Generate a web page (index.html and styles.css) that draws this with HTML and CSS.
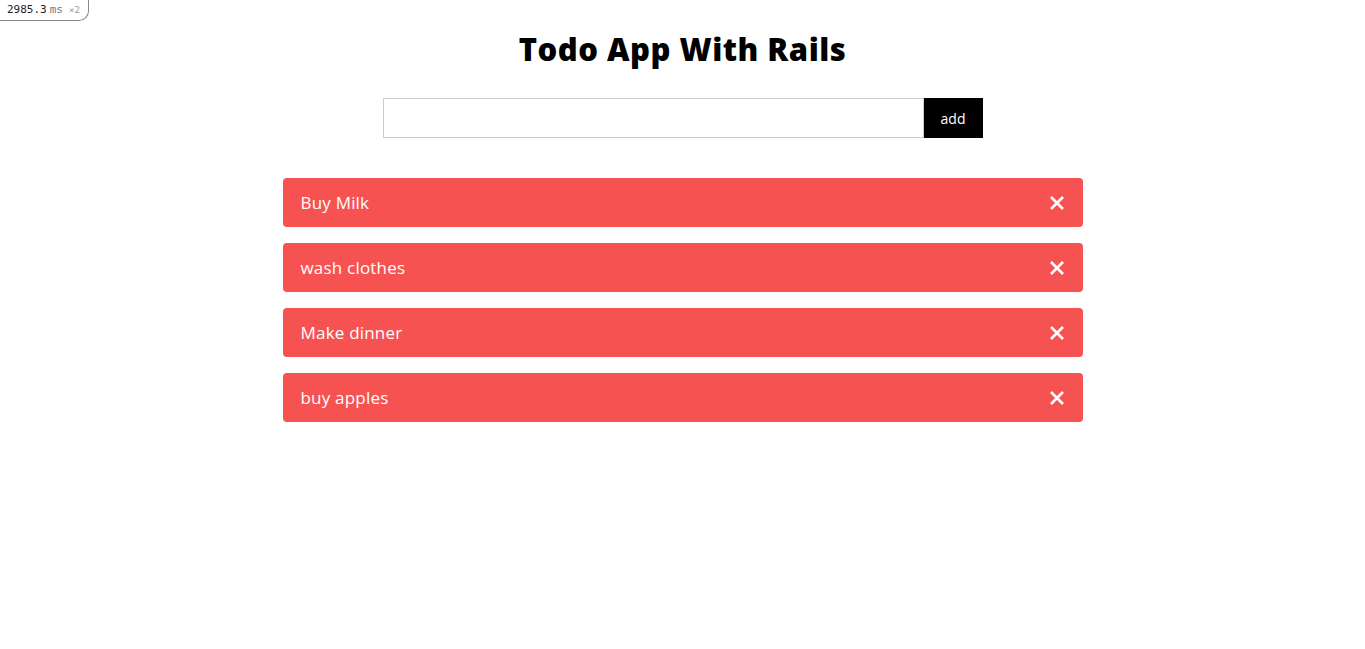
FILE: index.html
```html
<!DOCTYPE html>
<html>
<head>
<meta charset="utf-8">
<link rel="stylesheet" href="styles.css">
</head>
<body>
<div class="profiler"><span class="ms-num">2985.3</span><span class="ms-unit">ms</span><span class="ms-count">×2</span></div>
<main class="app">
  <h1 class="title">Todo App With Rails</h1>
  <form class="add-form">
    <input class="add-input" type="text">
    <button class="add-btn" type="button">add</button>
  </form>
  <ul class="todo-list">
    <li class="todo"><span class="todo-text">Buy Milk</span><svg class="x" viewBox="0 0 16 16" width="16" height="16"><path d="M2 2L14 14M14 2L2 14" stroke="#fff" stroke-width="2.6" stroke-linecap="butt"/></svg></li>
    <li class="todo"><span class="todo-text">wash clothes</span><svg class="x" viewBox="0 0 16 16" width="16" height="16"><path d="M2 2L14 14M14 2L2 14" stroke="#fff" stroke-width="2.6" stroke-linecap="butt"/></svg></li>
    <li class="todo"><span class="todo-text">Make dinner</span><svg class="x" viewBox="0 0 16 16" width="16" height="16"><path d="M2 2L14 14M14 2L2 14" stroke="#fff" stroke-width="2.6" stroke-linecap="butt"/></svg></li>
    <li class="todo"><span class="todo-text">buy apples</span><svg class="x" viewBox="0 0 16 16" width="16" height="16"><path d="M2 2L14 14M14 2L2 14" stroke="#fff" stroke-width="2.6" stroke-linecap="butt"/></svg></li>
  </ul>
</main>
</body>
</html>
```

FILE: styles.css
```css
* { box-sizing: border-box; }
html, body { margin: 0; padding: 0; background: #fff; }
body { font-family: "Open Sans", "Noto Sans", sans-serif; color: #000; }

.profiler {
  position: absolute;
  left: 0; top: 0;
  width: 89px;
  height: 21px;
  padding: 0 0 0 7px;
  border: 1px solid #888;
  border-top: none; border-left: none;
  border-bottom-right-radius: 10px;
  background: #fff;
  font-family: "DejaVu Sans Mono", monospace;
  font-size: 11px;
  line-height: 20px;
  color: #222;
  white-space: nowrap;
}
.ms-unit { color: #777; margin-left: 3px; }
.ms-count { color: #999; font-size: 9px; margin-left: 6px; }

.app {
  display: flex;
  flex-direction: column;
  align-items: center;
  padding-top: 30px;
}
.title {
  margin: 0;
  font-size: 31px;
  font-weight: 800;
  line-height: 38px;
  letter-spacing: 0.5px;
}
.add-form {
  display: flex;
  width: 600px;
  margin-top: 30px;
}
.add-input {
  flex: 1;
  height: 40px;
  border: 1px solid #ccc;
  margin: 0;
  outline: none;
  padding: 0 10px;
}
.add-btn {
  width: 59px;
  height: 40px;
  border: none;
  margin: 0;
  background: #000;
  color: #fff;
  font-family: inherit;
  font-size: 14px;
}
.todo-list {
  list-style: none;
  margin: 40px 0 0;
  padding: 0;
  width: 800px;
  display: flex;
  flex-direction: column;
  gap: 16px;
}
.todo {
  display: flex;
  align-items: center;
  justify-content: space-between;
  height: 49px;
  padding: 0 18px 0 18px;
  background: #f75252;
  border-radius: 4px;
  color: #fff;
}
.todo-text { font-size: 17px; letter-spacing: 0.2px; }
.x { display: block; }
```
